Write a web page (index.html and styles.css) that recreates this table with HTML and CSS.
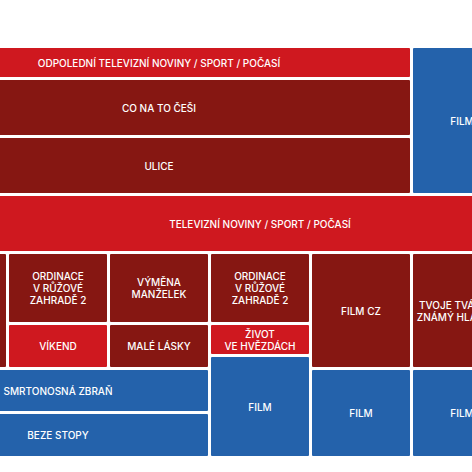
FILE: index.html
```html
<!DOCTYPE html>
<html lang="cs">
<head>
    <meta charset="UTF-8">
    <title>Program</title>
    <link rel="stylesheet" href="styles.css">
</head>
<body>
    <div class="schedule">
        <!-- Afternoon block -->
        <div class="show red news">ODPOLEDNÍ TELEVIZNÍ NOVINY / SPORT / POČASÍ</div>
        <div class="show dark conato">CO NA TO ČEŠI</div>
        <div class="show dark ulice">ULICE</div>
        <div class="show blue film-top">FILM</div>

        <!-- Evening news -->
        <div class="show red news-main">TELEVIZNÍ NOVINY / SPORT / POČASÍ</div>

        <!-- Prime time -->
        <div class="show dark edge"></div>
        <div class="show dark ord-a">ORDINACE<br>V RŮŽOVÉ<br>ZAHRADĚ 2</div>
        <div class="show dark vymena">VÝMĚNA<br>MANŽELEK</div>
        <div class="show dark ord-b">ORDINACE<br>V RŮŽOVÉ<br>ZAHRADĚ 2</div>
        <div class="show dark filmcz">FILM CZ</div>
        <div class="show dark tvoje">TVOJE TVÁŘ<br>ZNÁMÝ HLAS</div>

        <div class="show red vikend">VÍKEND</div>
        <div class="show dark lasky">MALÉ LÁSKY</div>
        <div class="show red zivot">ŽIVOT<br>VE HVĚZDÁCH</div>

        <!-- Late night -->
        <div class="show blue film-a">FILM</div>
        <div class="show blue smrt">SMRTONOSNÁ ZBRAŇ</div>
        <div class="show blue beze">BEZE STOPY</div>
        <div class="show blue film-b">FILM</div>
        <div class="show blue film-c">FILM</div>
    </div>
</body>
</html>
```

FILE: styles.css
```css
/* Basic Styles */
body {
    margin: 0;
    background-color: #fff;
    overflow: hidden;
    font-family: Inter, "Noto Sans", sans-serif;
}

.schedule {
    display: grid;
    grid-template-columns: repeat(7, 98px);
    grid-template-rows: 29px 55px 55px 55px 68px 29px 10px 41px 42px;
    gap: 3px;
    margin-left: -92px;
    padding-top: 48px;
    width: 704px;
}

.show {
    display: flex;
    align-items: center;
    justify-content: center;
    text-align: center;
    color: #fff;
    font-size: 10px;
    font-weight: 500;
    line-height: 12px;
    border-radius: 1px;
}

.red {
    background-color: #cf181f;
}

.dark {
    background-color: #861712;
}

.blue {
    background-color: #2462ab;
}

/* Placement */
.news { grid-column: 1 / 6; grid-row: 1; }
.conato { grid-column: 1 / 6; grid-row: 2; }
.ulice { grid-column: 1 / 6; grid-row: 3; }
.film-top { grid-column: 6; grid-row: 1 / 4; }

.news-main { grid-column: 1 / 8; grid-row: 4; }

.edge { grid-column: 1; grid-row: 5 / 8; }
.ord-a { grid-column: 2; grid-row: 5; }
.vymena { grid-column: 3; grid-row: 5; }
.ord-b { grid-column: 4; grid-row: 5; }
.filmcz { grid-column: 5; grid-row: 5 / 8; }
.tvoje { grid-column: 6; grid-row: 5 / 8; width: 74px; }

.vikend { grid-column: 2; grid-row: 6 / 8; }
.lasky { grid-column: 3; grid-row: 6 / 8; }
.zivot { grid-column: 4; grid-row: 6; }

.film-a { grid-column: 4; grid-row: 7 / 10; }
.smrt { grid-column: 1 / 4; grid-row: 8; }
.beze { grid-column: 1 / 4; grid-row: 9; }
.film-b { grid-column: 5; grid-row: 8 / 10; }
.film-c { grid-column: 6; grid-row: 8 / 10; }
```
